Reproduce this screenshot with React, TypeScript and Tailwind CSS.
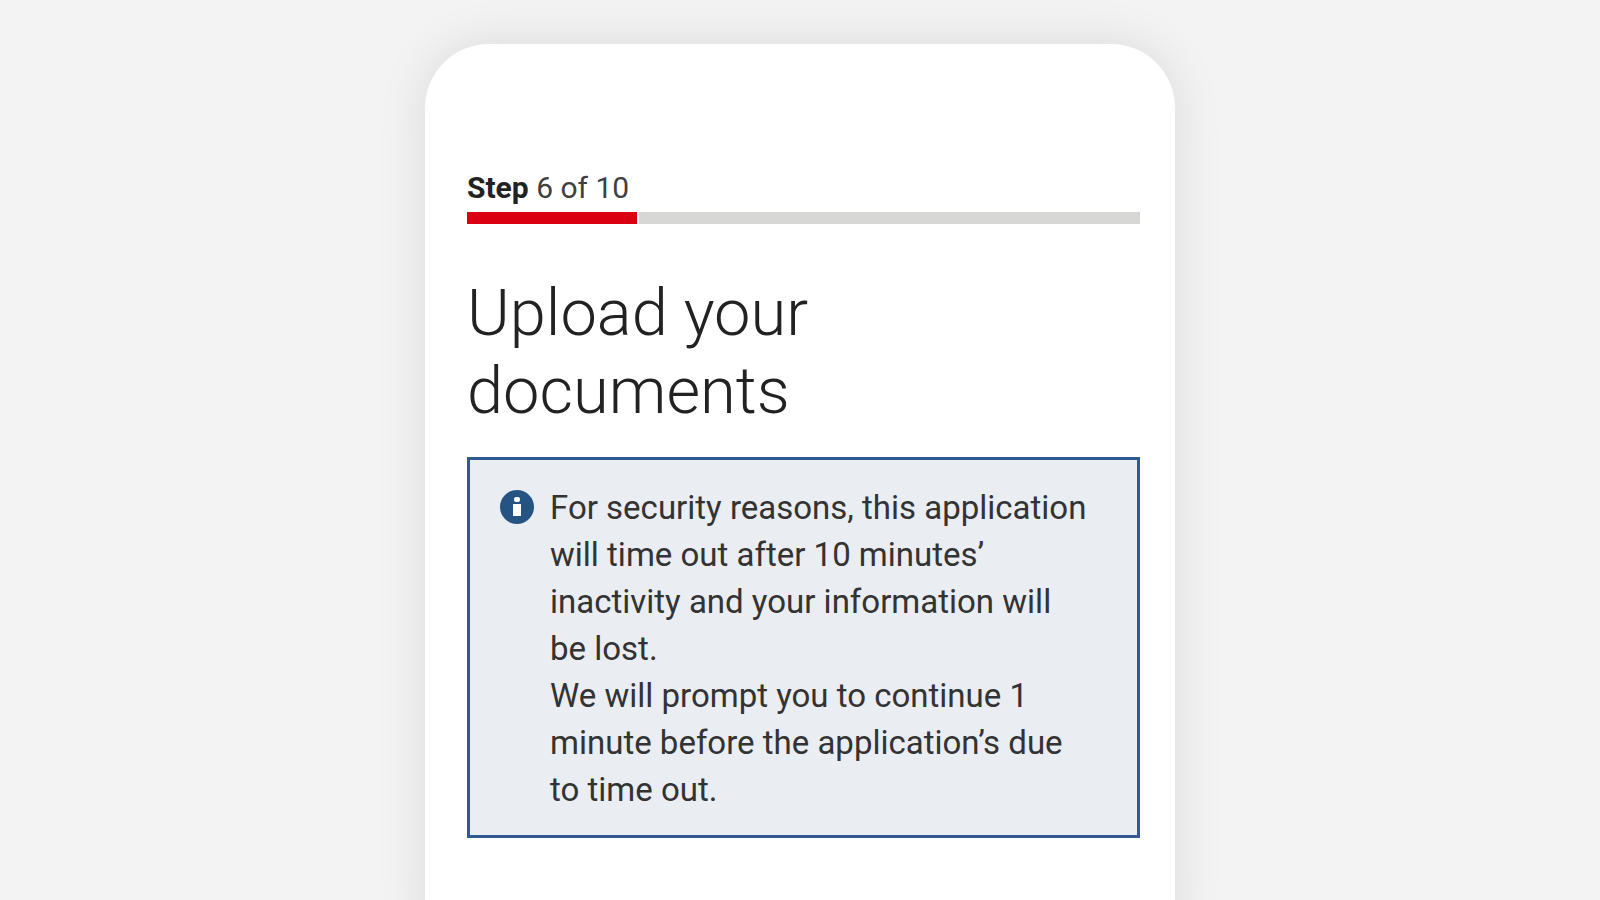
import React from 'react';

interface StepProgressProps {
  current: number;
  total: number;
}

const StepProgress: React.FC<StepProgressProps> = ({ current, total }) => {
  return (
    <div>
      <p className="text-[30px] leading-8 text-[#404040]">
        <span className="font-bold text-[#222222]">Step</span> {current} of {total}
      </p>
      <div className="mt-2 flex h-3 gap-[2px]">
        <div className="w-[170px] bg-[#db0011]" />
        <div className="flex-1 bg-[#d7d8d6]" />
      </div>
    </div>
  );
};

const InfoIcon: React.FC = () => {
  return (
    <svg className="mt-[6px] size-[34px] shrink-0" viewBox="0 0 34 34" aria-hidden="true">
      <circle cx="17" cy="17" r="17" fill="#265482" />
      <rect x="14" y="7" width="6" height="5" rx="2" fill="#ffffff" />
      <path d="M13 14h8v12h-8z" fill="#ffffff" />
    </svg>
  );
};

const App: React.FC = () => {
  return (
    <main className="flex min-h-screen justify-center overflow-hidden bg-[#f3f3f3] pt-11 font-['Roboto',sans-serif]">
      <div className="-mb-16 w-full max-w-[750px] rounded-[64px] bg-white pt-32 pr-[35px] pb-32 pl-[42px] shadow-[0_0_50px_rgba(0,0,0,0.1)]">
        <StepProgress current={6} total={10} />

        <h1 className="mt-[50px] max-w-md text-[65px] leading-[78px] font-light text-[#222222]">
          Upload your documents
        </h1>

        {/* Timeout notice */}
        <div className="mt-[27px] flex gap-4 border-[3px] border-[#305a91] bg-[#eaedf2] px-[30px] pt-6 pb-[22px]">
          <InfoIcon />
          <div className="max-w-[542px] text-[33px] leading-[47px] text-[#333333]">
            <p>
              For security reasons, this application will time out after 10 minutes’ inactivity and
              your information will <br />
              be lost.
            </p>
            <p>We will prompt you to continue 1 minute before the application’s due to time out.</p>
          </div>
        </div>
      </div>
    </main>
  );
};

export default App;
